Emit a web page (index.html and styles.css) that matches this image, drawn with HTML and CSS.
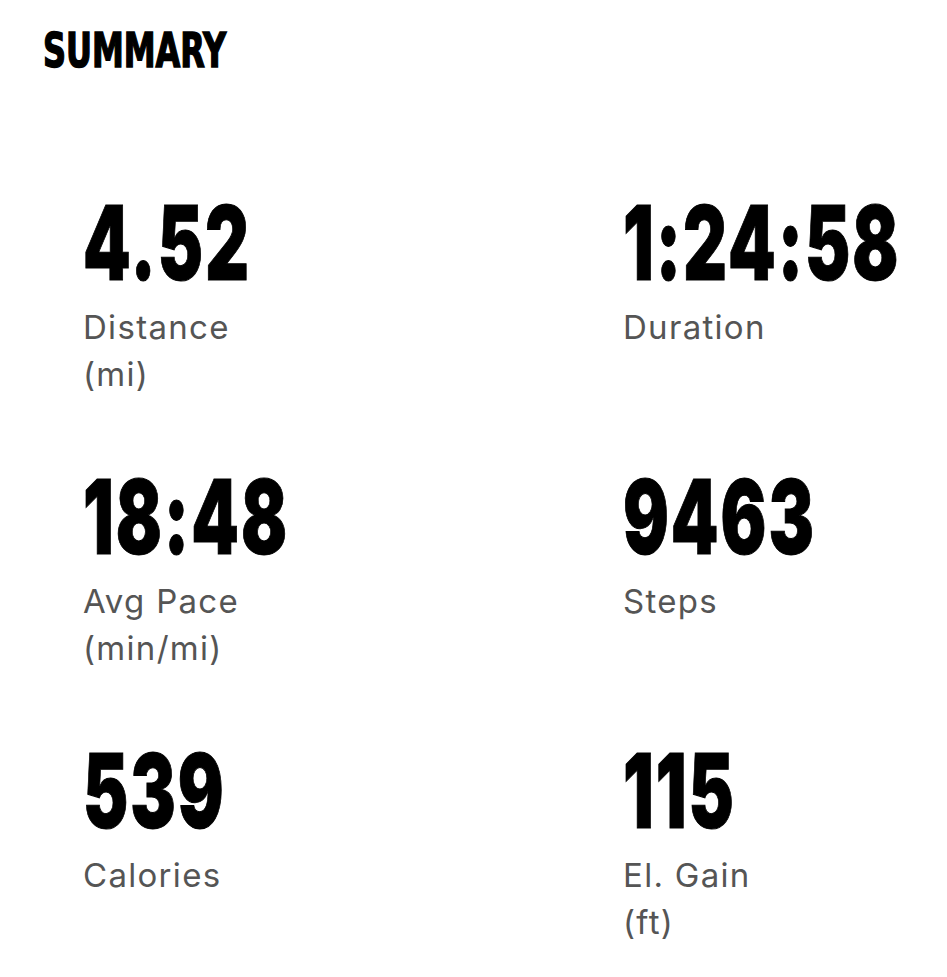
FILE: index.html
```
<!DOCTYPE html>
<html>
<head>
<meta charset="utf-8">
<link rel="stylesheet" href="styles.css">
</head>
<body>
<main class="summary">
  <h1 class="title"><span>SUMMARY</span></h1>
  <section class="stats">
    <div class="stat">
      <div class="value"><span>4.52</span></div>
      <div class="label">Distance<br>(mi)</div>
    </div>
    <div class="stat">
      <div class="value"><span>1:24:58</span></div>
      <div class="label">Duration</div>
    </div>
    <div class="stat">
      <div class="value"><span>18:48</span></div>
      <div class="label">Avg Pace<br>(min/mi)</div>
    </div>
    <div class="stat">
      <div class="value"><span>9463</span></div>
      <div class="label">Steps</div>
    </div>
    <div class="stat">
      <div class="value"><span>539</span></div>
      <div class="label">Calories</div>
    </div>
    <div class="stat">
      <div class="value"><span>115</span></div>
      <div class="label">El. Gain<br>(ft)</div>
    </div>
  </section>
</main>
</body>
</html>
```
FILE: styles.css
```
html, body {
  margin: 0;
  padding: 0;
  background: #ffffff;
}
.summary {
  padding: 0 0 0 43px;
}
.title {
  margin: 0;
  padding-top: 20px;
  font-family: "DejaVu Sans Condensed", "DejaVu Sans", sans-serif;
  font-weight: 700;
  font-size: 48px;
  line-height: 60px;
  color: #000;
  -webkit-text-stroke: 1.5px #000;
}
.title span {
  display: inline-block;
  transform: scaleX(0.74);
  transform-origin: left center;
}
.stats {
  display: grid;
  grid-template-columns: 540px minmax(0, 1fr);
  padding-left: 40px;
  padding-top: 110px;
}
.stat {
  height: 274px;
  min-width: 0;
}
.value {
  font-family: Inter, "DejaVu Sans Condensed", sans-serif;
  font-weight: 900;
  font-size: 103px;
  line-height: 105px;
  letter-spacing: 3px;
  color: #000;
  white-space: nowrap;
  -webkit-text-stroke: 1px #000;
}
.value span {
  display: inline-block;
  width: 66%;
  transform: scaleX(0.66);
  transform-origin: left center;
}
.label {
  margin-top: 9px;
  font-family: Inter, "Liberation Sans", sans-serif;
  font-size: 33px;
  line-height: 47px;
  letter-spacing: 1.3px;
  color: #555;
}
```
